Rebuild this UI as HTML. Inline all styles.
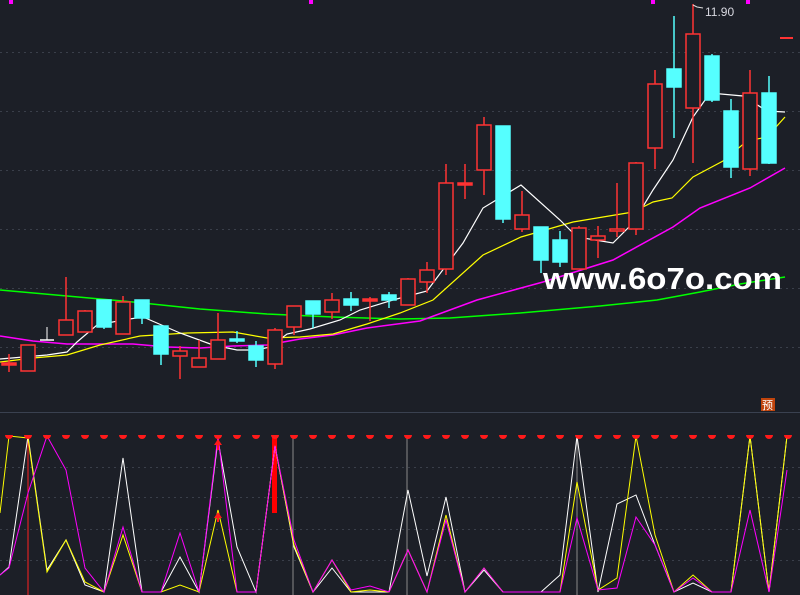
<!DOCTYPE html><html><head><meta charset="utf-8"><style>
html,body{margin:0;padding:0;background:#1c1f27;width:800px;height:595px;overflow:hidden}
svg{display:block}
</style></head><body>
<svg width="800" height="595" viewBox="0 0 800 595" xmlns="http://www.w3.org/2000/svg" font-family="Liberation Sans, sans-serif">
<rect width="800" height="595" fill="#1c1f27"/>
<g stroke="#3a3f4a" stroke-width="1" stroke-dasharray="2,4">
<line x1="0" y1="52.5" x2="800" y2="52.5"/><line x1="0" y1="111.5" x2="800" y2="111.5"/><line x1="0" y1="170.5" x2="800" y2="170.5"/><line x1="0" y1="229.5" x2="800" y2="229.5"/><line x1="0" y1="288.5" x2="800" y2="288.5"/><line x1="0" y1="347.5" x2="800" y2="347.5"/>
<line x1="0" y1="467.5" x2="800" y2="467.5"/><line x1="0" y1="497.5" x2="800" y2="497.5"/><line x1="0" y1="529.5" x2="800" y2="529.5"/><line x1="0" y1="560.5" x2="800" y2="560.5"/>
</g>
<line x1="0" y1="412.5" x2="800" y2="412.5" stroke="#3a4150"/>
<g fill="#ff00ff"><rect x="9" y="0" width="4" height="4"/><rect x="309" y="0" width="4" height="4"/><rect x="651" y="0" width="4" height="4"/><rect x="746" y="0" width="4" height="4"/></g>
<polyline fill="none" stroke="#00ff00" stroke-width="1.5" points="0,290 67,296 133,302 200,309 267,314 333,317 400,319 450,318 520,313 600,306 657,300 700,292 740,284 785,277"/>
<polyline fill="none" stroke="#ff00ff" stroke-width="1.5" points="0,336 33,341 67,344 133,344 167,347 200,348 233,346 267,345 300,339 333,335 367,328 420,321 477,300 543,282 613,260 673,227 700,208 750,188 785,168"/>
<polyline fill="none" stroke="#ffff00" stroke-width="1.2" points="0,362 33,358 67,355 100,345 140,336 187,333 233,332 267,338 300,337 333,334 367,324 400,313 433,300 483,255 521,237 573,222 633,212 653,202 672,198 693,177 723,161 747,141 767,137 785,117"/>
<polyline fill="none" stroke="#ffffff" stroke-width="1.2" points="0,359 47,355 67,352 77,342 97,325 123,320 143,317 150,320 180,333 213,345 237,350 257,350 270,347 287,334 310,329 340,320 360,310 393,300 427,291 463,243 483,208 521,185 560,220 577,237 613,243 633,223 653,190 673,160 693,117 710,93 743,96 767,111 785,112"/>
<g stroke="#ff3333" stroke-width="1.5" fill="#1c1f27">
<line x1="9" y1="354" x2="9" y2="372"/><rect x="2" y="363" width="14" height="2" fill="#ff3333"/>
<rect x="21" y="345" width="14" height="26"/>
<line x1="66" y1="277" x2="66" y2="320"/><rect x="59" y="320" width="14" height="15"/>
<line x1="85" y1="310" x2="85" y2="311"/><rect x="78" y="311" width="14" height="21"/>
<line x1="123" y1="296" x2="123" y2="302"/><rect x="116" y="302" width="14" height="32"/>
<line x1="180" y1="346" x2="180" y2="379"/><rect x="173" y="351" width="14" height="5"/>
<line x1="199" y1="340" x2="199" y2="358"/><rect x="192" y="358" width="14" height="9"/>
<line x1="218" y1="313" x2="218" y2="340"/><rect x="211" y="340" width="14" height="19"/>
<line x1="275" y1="328" x2="275" y2="369"/><rect x="268" y="330" width="14" height="34"/>
<line x1="294" y1="327" x2="294" y2="335"/><rect x="287" y="306" width="14" height="21"/>
<line x1="332" y1="293" x2="332" y2="319"/><rect x="325" y="300" width="14" height="12"/>
<line x1="370" y1="297" x2="370" y2="321"/><rect x="363" y="299" width="14" height="2" fill="#ff3333"/>
<line x1="408" y1="278" x2="408" y2="279"/><rect x="401" y="279" width="14" height="26"/>
<line x1="427" y1="262" x2="427" y2="293"/><rect x="420" y="270" width="14" height="12"/>
<line x1="446" y1="164" x2="446" y2="275"/><rect x="439" y="183" width="14" height="86"/>
<line x1="465" y1="164" x2="465" y2="199"/><rect x="458" y="183" width="14" height="2" fill="#ff3333"/>
<line x1="484" y1="117" x2="484" y2="195"/><rect x="477" y="125" width="14" height="45"/>
<line x1="522" y1="191" x2="522" y2="232"/><rect x="515" y="215" width="14" height="14"/>
<line x1="579" y1="226" x2="579" y2="269"/><rect x="572" y="228" width="14" height="41"/>
<line x1="598" y1="226" x2="598" y2="258"/><rect x="591" y="236" width="14" height="4"/>
<line x1="617" y1="183" x2="617" y2="237"/><rect x="610" y="229" width="14" height="2"/>
<line x1="636" y1="162" x2="636" y2="235"/><rect x="629" y="163" width="14" height="66"/>
<line x1="655" y1="70" x2="655" y2="169"/><rect x="648" y="84" width="14" height="64"/>
<line x1="693" y1="4" x2="693" y2="163"/><rect x="686" y="34" width="14" height="74"/>
<line x1="750" y1="70" x2="750" y2="176"/><rect x="743" y="93" width="14" height="76"/>
</g>
<g stroke="#55ffff" stroke-width="1.5" fill="#55ffff">
<line x1="104" y1="300" x2="104" y2="329"/><rect x="97" y="300" width="14" height="27"/>
<line x1="142" y1="300" x2="142" y2="324"/><rect x="135" y="300" width="14" height="18"/>
<line x1="161" y1="326" x2="161" y2="365"/><rect x="154" y="326" width="14" height="28"/>
<line x1="237" y1="331" x2="237" y2="343"/><rect x="230" y="339" width="14" height="2"/>
<line x1="256" y1="341" x2="256" y2="367"/><rect x="249" y="346" width="14" height="14"/>
<line x1="313" y1="301" x2="313" y2="328"/><rect x="306" y="301" width="14" height="13"/>
<line x1="351" y1="292" x2="351" y2="311"/><rect x="344" y="299" width="14" height="6"/>
<line x1="389" y1="292" x2="389" y2="308"/><rect x="382" y="295" width="14" height="5"/>
<line x1="503" y1="126" x2="503" y2="223"/><rect x="496" y="126" width="14" height="93"/>
<line x1="541" y1="227" x2="541" y2="273"/><rect x="534" y="227" width="14" height="33"/>
<line x1="560" y1="231" x2="560" y2="267"/><rect x="553" y="240" width="14" height="22"/>
<line x1="674" y1="16" x2="674" y2="138"/><rect x="667" y="69" width="14" height="18"/>
<line x1="712" y1="54" x2="712" y2="102"/><rect x="705" y="56" width="14" height="44"/>
<line x1="731" y1="99" x2="731" y2="178"/><rect x="724" y="111" width="14" height="56"/>
<line x1="769" y1="76" x2="769" y2="164"/><rect x="762" y="93" width="14" height="70"/>
</g>
<line x1="40" y1="340" x2="54" y2="340" stroke="#fff" stroke-width="1.5"/><line x1="47" y1="327" x2="47" y2="340" stroke="#fff"/>
<polyline points="693,5 697,7 703,8" fill="none" stroke="#ddd"/>
<text x="705" y="16" fill="#d8d8e0" font-size="12">11.90</text>
<rect x="780" y="37" width="13" height="2" fill="#ff3333"/>
<text x="543" y="289" fill="#ffffff" font-size="31" font-weight="bold" textLength="239" lengthAdjust="spacingAndGlyphs">www.6o7o.com</text>
<rect x="761" y="398" width="14" height="13" fill="#c0440c"/>
<text x="762" y="409" fill="#fff" font-size="11" font-family="Noto Sans CJK SC, sans-serif">预</text>
<g stroke-width="1">
<line x1="28" y1="436" x2="28" y2="595" stroke="#ff2020"/>
<line x1="293" y1="436" x2="293" y2="595" stroke="#8a8a8a"/>
<line x1="407" y1="436" x2="407" y2="595" stroke="#8a8a8a"/>
<line x1="577" y1="436" x2="577" y2="595" stroke="#8a8a8a"/>
</g>
<rect x="272" y="436" width="5" height="77" fill="#ff0000"/>
<polyline fill="none" stroke="#ffffff" points="0,575 9,567 28,436 47,570 66,540 85,585 104,592 123,458 142,592 161,592 180,557 199,592 218,440 237,547 256,592 275,446 294,547 313,592 332,568 351,592 389,592 408,490 427,576 446,497 465,592 484,570 503,592 541,592 560,575 577,436 598,592 617,504 636,495 655,545 674,592 693,583 712,592 731,592 750,436 769,592 787,436"/>
<polyline fill="none" stroke="#ffff00" points="0,513 9,436 28,438 47,572 66,540 85,582 104,592 123,535 142,592 161,592 180,585 199,592 218,510 237,592 256,592 275,446 294,545 313,592 332,560 351,592 370,590 389,592 408,550 427,592 446,515 465,592 484,568 503,592 541,592 560,592 577,482 598,590 617,578 636,436 655,535 674,592 693,575 712,592 731,592 750,436 769,592 787,436"/>
<polyline fill="none" stroke="#ff00ff" points="0,575 9,568 28,493 47,436 66,470 85,568 104,592 123,527 142,592 161,592 180,533 199,592 218,436 237,592 256,592 275,446 294,540 313,592 332,560 351,590 370,586 389,592 408,550 427,592 446,520 465,592 484,568 503,592 560,592 577,518 598,590 617,588 636,517 655,545 674,592 693,578 712,592 731,592 750,510 769,592 787,470"/>
<g fill="#ff1a1a">
<path d="M5,435h8a4,4 0 0 1 -8,0z M24,435h8a4,4 0 0 1 -8,0z M43,435h8a4,4 0 0 1 -8,0z M62,435h8a4,4 0 0 1 -8,0z M81,435h8a4,4 0 0 1 -8,0z M100,435h8a4,4 0 0 1 -8,0z M119,435h8a4,4 0 0 1 -8,0z M138,435h8a4,4 0 0 1 -8,0z M157,435h8a4,4 0 0 1 -8,0z M176,435h8a4,4 0 0 1 -8,0z M195,435h8a4,4 0 0 1 -8,0z M214,435h8a4,4 0 0 1 -8,0z M233,435h8a4,4 0 0 1 -8,0z M252,435h8a4,4 0 0 1 -8,0z M271,435h8a4,4 0 0 1 -8,0z M290,435h8a4,4 0 0 1 -8,0z M309,435h8a4,4 0 0 1 -8,0z M328,435h8a4,4 0 0 1 -8,0z M347,435h8a4,4 0 0 1 -8,0z M366,435h8a4,4 0 0 1 -8,0z M385,435h8a4,4 0 0 1 -8,0z M404,435h8a4,4 0 0 1 -8,0z M423,435h8a4,4 0 0 1 -8,0z M442,435h8a4,4 0 0 1 -8,0z M461,435h8a4,4 0 0 1 -8,0z M480,435h8a4,4 0 0 1 -8,0z M499,435h8a4,4 0 0 1 -8,0z M518,435h8a4,4 0 0 1 -8,0z M537,435h8a4,4 0 0 1 -8,0z M556,435h8a4,4 0 0 1 -8,0z M575,435h8a4,4 0 0 1 -8,0z M594,435h8a4,4 0 0 1 -8,0z M613,435h8a4,4 0 0 1 -8,0z M632,435h8a4,4 0 0 1 -8,0z M651,435h8a4,4 0 0 1 -8,0z M670,435h8a4,4 0 0 1 -8,0z M689,435h8a4,4 0 0 1 -8,0z M708,435h8a4,4 0 0 1 -8,0z M727,435h8a4,4 0 0 1 -8,0z M746,435h8a4,4 0 0 1 -8,0z M765,435h8a4,4 0 0 1 -8,0z M784,435h8a4,4 0 0 1 -8,0z"/>
<path d="M214,445l4,-6l4,6h-3v5h-2v-5z M214,518l4,-6l4,6h-3v4h-2v-4z"/>
</g>
</svg>
</body></html>
